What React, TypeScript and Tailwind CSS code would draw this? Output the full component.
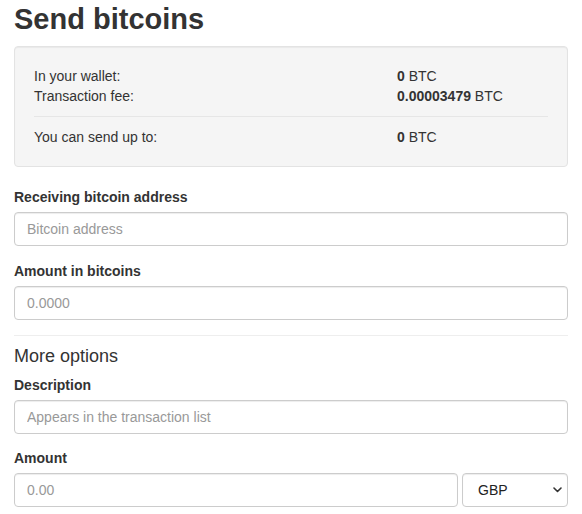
export default function App() {
  return (
    <div className="min-h-screen bg-white px-[14px] font-['Liberation_Sans',Arial,sans-serif] text-[14px] leading-[20px] text-[#333]">
      <h2 className="pt-[3px] mb-[10px] text-[29px] leading-[33px] font-bold text-[#333]">Send bitcoins</h2>

      <div className="mb-[20px] rounded-[4px] border border-[#e3e3e3] bg-[#f5f5f5] p-[19px] shadow-[inset_0_1px_1px_rgba(0,0,0,0.05)]">
        <div className="grid grid-cols-[363px_1fr]">
          <div>In your wallet:</div>
          <div>
            <b>0</b> BTC
          </div>
          <div>Transaction fee:</div>
          <div>
            <b>0.00003479</b> BTC
          </div>
        </div>
        <hr className="my-[10px] border-t border-[#e6e6e6]" />
        <div className="grid grid-cols-[363px_1fr]">
          <div>You can send up to:</div>
          <div>
            <b>0</b> BTC
          </div>
        </div>
      </div>

      <div className="mb-[15px]">
        <label className="mb-[5px] block font-bold">Receiving bitcoin address</label>
        <input
          className="block h-[34px] w-full rounded-[4px] border border-[#ccc] bg-white px-[12px] py-[6px] shadow-[inset_0_1px_1px_rgba(0,0,0,0.075)] placeholder:text-[#999] outline-none"
          placeholder="Bitcoin address"
        />
      </div>

      <div className="mb-[15px]">
        <label className="mb-[5px] block font-bold">Amount in bitcoins</label>
        <input
          className="block h-[34px] w-full rounded-[4px] border border-[#ccc] bg-white px-[12px] py-[6px] shadow-[inset_0_1px_1px_rgba(0,0,0,0.075)] placeholder:text-[#999] outline-none"
          placeholder="0.0000"
        />
      </div>

      <hr className="mb-[10px] border-t border-[#eee]" />

      <h4 className="mb-[9px] text-[18px] leading-[20px] font-normal">More options</h4>

      <div className="mb-[14px]">
        <label className="mb-[5px] block font-bold">Description</label>
        <input
          className="block h-[34px] w-full rounded-[4px] border border-[#ccc] bg-white px-[12px] py-[6px] shadow-[inset_0_1px_1px_rgba(0,0,0,0.075)] placeholder:text-[#999] outline-none"
          placeholder="Appears in the transaction list"
        />
      </div>

      <div className="mb-[15px]">
        <label className="mb-[5px] block font-bold">Amount</label>
        <div className="flex gap-[4px]">
          <input
            className="block h-[34px] min-w-0 flex-1 rounded-[4px] border border-[#ccc] bg-white px-[12px] py-[6px] shadow-[inset_0_1px_1px_rgba(0,0,0,0.075)] placeholder:text-[#999] outline-none"
            placeholder="0.00"
          />
          <div className="relative w-[106px]">
            <select className="block h-[34px] w-full appearance-none rounded-[4px] border border-[#ccc] bg-white pl-[15px] pr-[24px] text-[#222] shadow-[inset_0_1px_1px_rgba(0,0,0,0.075)] outline-none">
              <option>GBP</option>
            </select>
            <svg
              className="pointer-events-none absolute right-[6px] top-[14px]"
              width="9"
              height="6"
              viewBox="0 0 9 6"
              fill="none"
            >
              <path d="M1 1L4.5 4.5L8 1" stroke="#333" strokeWidth="1.6" strokeLinecap="round" strokeLinejoin="round" />
            </svg>
          </div>
        </div>
      </div>
    </div>
  );
}
